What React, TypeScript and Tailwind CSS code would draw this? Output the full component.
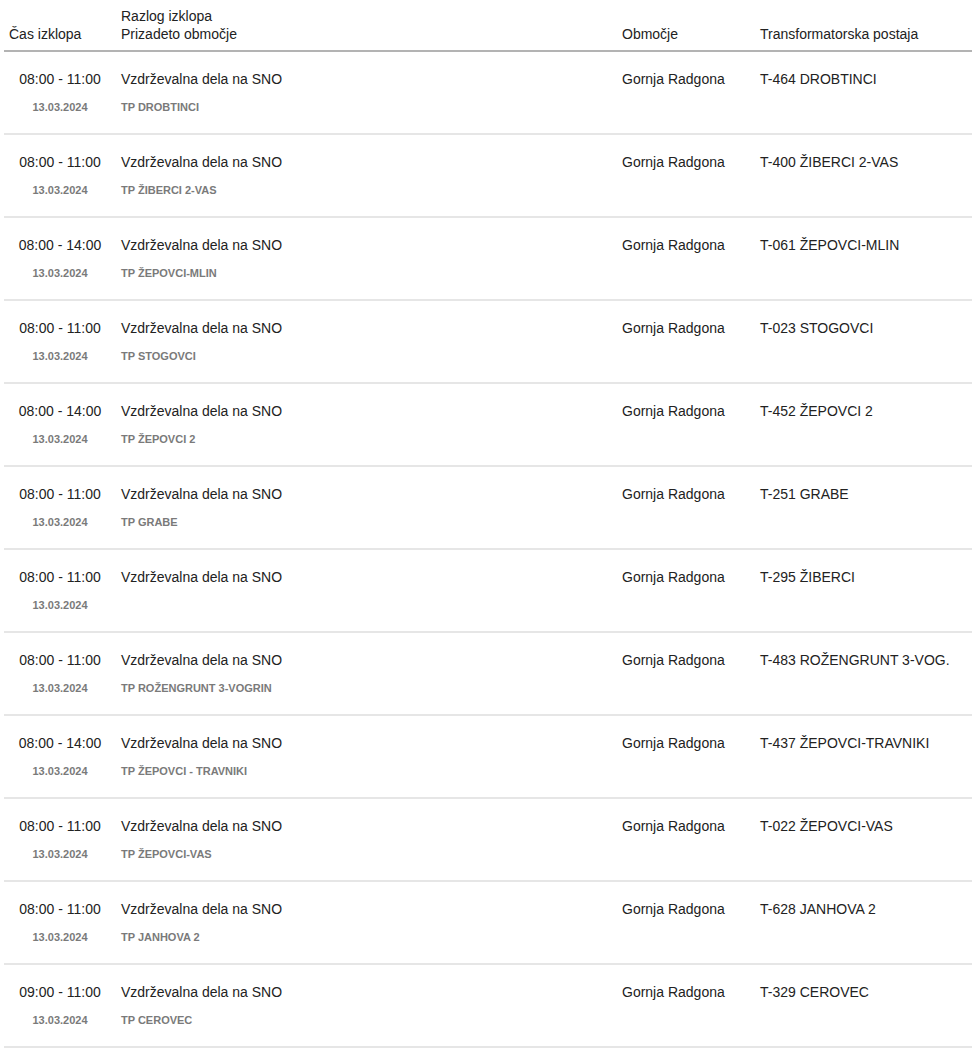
import React from "react";

type Row = { time: string; tp: string; area: string; station: string };

const rows: Row[] = [
  { time: "08:00 - 11:00", tp: "TP DROBTINCI", area: "Gornja Radgona", station: "T-464 DROBTINCI" },
  { time: "08:00 - 11:00", tp: "TP ŽIBERCI 2-VAS", area: "Gornja Radgona", station: "T-400 ŽIBERCI 2-VAS" },
  { time: "08:00 - 14:00", tp: "TP ŽEPOVCI-MLIN", area: "Gornja Radgona", station: "T-061 ŽEPOVCI-MLIN" },
  { time: "08:00 - 11:00", tp: "TP STOGOVCI", area: "Gornja Radgona", station: "T-023 STOGOVCI" },
  { time: "08:00 - 14:00", tp: "TP ŽEPOVCI 2", area: "Gornja Radgona", station: "T-452 ŽEPOVCI 2" },
  { time: "08:00 - 11:00", tp: "TP GRABE", area: "Gornja Radgona", station: "T-251 GRABE" },
  { time: "08:00 - 11:00", tp: "", area: "Gornja Radgona", station: "T-295 ŽIBERCI" },
  { time: "08:00 - 11:00", tp: "TP ROŽENGRUNT 3-VOGRIN", area: "Gornja Radgona", station: "T-483 ROŽENGRUNT 3-VOG." },
  { time: "08:00 - 14:00", tp: "TP ŽEPOVCI - TRAVNIKI", area: "Gornja Radgona", station: "T-437 ŽEPOVCI-TRAVNIKI" },
  { time: "08:00 - 11:00", tp: "TP ŽEPOVCI-VAS", area: "Gornja Radgona", station: "T-022 ŽEPOVCI-VAS" },
  { time: "08:00 - 11:00", tp: "TP JANHOVA 2", area: "Gornja Radgona", station: "T-628 JANHOVA 2" },
  { time: "09:00 - 11:00", tp: "TP CEROVEC", area: "Gornja Radgona", station: "T-329 CEROVEC" },
];

export default function App() {
  return (
    <div
      className="bg-white min-h-[1055px] pl-[4px] text-[14px] text-[#222]"
      style={{ fontFamily: '"Liberation Sans", Arial, sans-serif' }}
    >
      <div className="w-[968px]">
        <div className="grid grid-cols-[112px_501px_138px_1fr] h-[52px] border-b-2 border-[#b3b3b3] leading-[18px]">
          <div className="flex items-end px-[5px] pb-[7px]">Čas izklopa</div>
          <div className="flex flex-col justify-end px-[5px] pb-[7px]">
            <span>Razlog izklopa</span>
            <span>Prizadeto območje</span>
          </div>
          <div className="flex items-end px-[5px] pb-[7px]">Območje</div>
          <div className="flex items-end px-[5px] pb-[7px]">Transformatorska postaja</div>
        </div>
        {rows.map((r, i) => (
          <div
            key={i}
            className="grid grid-cols-[112px_501px_138px_1fr] h-[83px] border-b-2 border-[#e6e6e6] leading-[18px]"
          >
            <div className="px-[5px] pt-[18px] text-center">
              <div>{r.time}</div>
              <div className="mt-[13px] text-[11px] leading-[13px] font-bold text-[#7a7a7a]">13.03.2024</div>
            </div>
            <div className="px-[5px] pt-[18px]">
              <div>Vzdrževalna dela na SNO</div>
              {r.tp && (
                <div className="mt-[13px] text-[11px] leading-[13px] font-bold text-[#7a7a7a]">{r.tp}</div>
              )}
            </div>
            <div className="px-[5px] pt-[18px] whitespace-nowrap">{r.area}</div>
            <div className="px-[5px] pt-[18px] whitespace-nowrap">{r.station}</div>
          </div>
        ))}
      </div>
    </div>
  );
}
